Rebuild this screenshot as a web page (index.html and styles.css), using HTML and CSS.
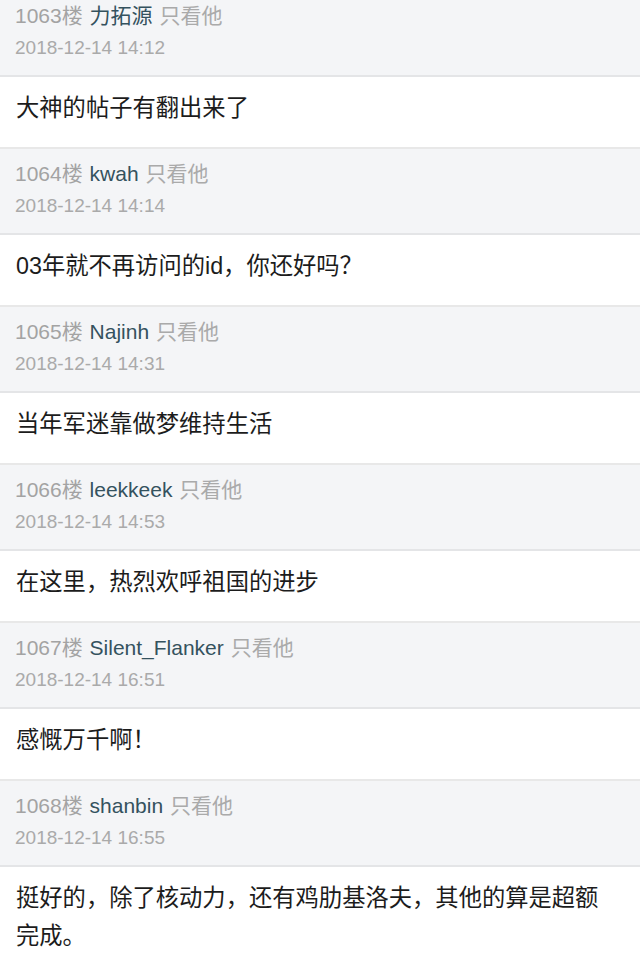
FILE: index.html
```html
<!DOCTYPE html>
<html lang="zh-CN">
<head>
<meta charset="utf-8">
<link rel="stylesheet" href="styles.css">
</head>
<body>
<div class="list">
  <div class="post">
    <div class="head">
      <div class="meta"><span class="floor">1063楼</span> <span class="name">力拓源</span> <span class="only">只看他</span></div>
      <div class="date">2018-12-14 14:12</div>
    </div>
    <div class="body">大神的帖子有翻出来了</div>
  </div>
  <div class="post">
    <div class="head">
      <div class="meta"><span class="floor">1064楼</span> <span class="name">kwah</span> <span class="only">只看他</span></div>
      <div class="date">2018-12-14 14:14</div>
    </div>
    <div class="body">03年就不再访问的id，你还好吗？</div>
  </div>
  <div class="post">
    <div class="head">
      <div class="meta"><span class="floor">1065楼</span> <span class="name">Najinh</span> <span class="only">只看他</span></div>
      <div class="date">2018-12-14 14:31</div>
    </div>
    <div class="body">当年军迷靠做梦维持生活</div>
  </div>
  <div class="post">
    <div class="head">
      <div class="meta"><span class="floor">1066楼</span> <span class="name">leekkeek</span> <span class="only">只看他</span></div>
      <div class="date">2018-12-14 14:53</div>
    </div>
    <div class="body">在这里，热烈欢呼祖国的进步</div>
  </div>
  <div class="post">
    <div class="head">
      <div class="meta"><span class="floor">1067楼</span> <span class="name">Silent_Flanker</span> <span class="only">只看他</span></div>
      <div class="date">2018-12-14 16:51</div>
    </div>
    <div class="body">感慨万千啊！</div>
  </div>
  <div class="post">
    <div class="head">
      <div class="meta"><span class="floor">1068楼</span> <span class="name">shanbin</span> <span class="only">只看他</span></div>
      <div class="date">2018-12-14 16:55</div>
    </div>
    <div class="body">挺好的，除了核动力，还有鸡肋基洛夫，其他的算是超额完成。</div>
  </div>
</div>
</body>
</html>
```
FILE: styles.css
```css
html, body {
  margin: 0;
  padding: 0;
  background: #ffffff;
  overflow: hidden;
}
body {
  font-family: "Liberation Sans", "Noto Sans CJK SC", sans-serif;
  width: 640px;
  height: 954px;
}
.list {
  margin-top: -9px;
}
.head {
  background: #f4f5f7;
  padding: 9px 14px 11px 15px;
  height: 64px;
  border-bottom: 2px solid #e4e5e7;
}
.meta, .date {
  font-size: 21px;
  line-height: 32px;
  white-space: nowrap;
}
.meta { word-spacing: 1px; }
.floor { color: #a3a3a3; }
.name { color: #34525e; }
.only { color: #aaaaaa; }
.date { color: #aaaaaa; font-size: 19px; }
.body {
  background: #ffffff;
  color: #1c1c1c;
  font-size: 23.3px;
  line-height: 38px;
  padding: 12px 36px 20px 16px;
  border-bottom: 2px solid #e8e8e8;
}
```
